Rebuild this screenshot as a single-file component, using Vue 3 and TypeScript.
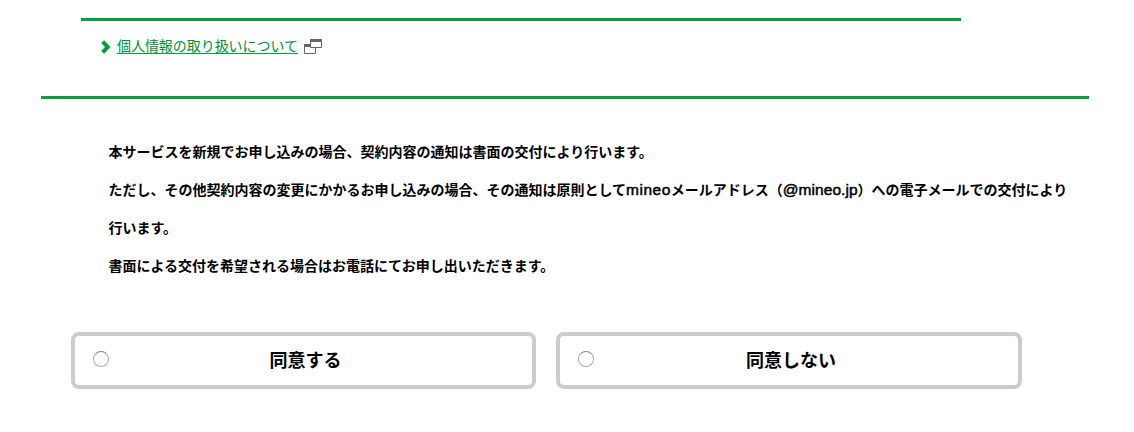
<script setup lang="ts">
import { ref } from 'vue'

const choice = ref<string | null>(null)
const options = [
  { value: 'agree', label: '同意する' },
  { value: 'disagree', label: '同意しない' },
]
</script>

<template>
  <main class="page">
    <section class="privacy">
      <a class="link" href="#">
        <svg class="chevron" width="10" height="14" viewBox="0 0 10 14"><path d="M1.700 1.700 6.800 7l-5.100 5.300" fill="none" stroke="#00a040" stroke-width="4" /></svg>
        <span class="label">個人情報の取り扱いについて</span>
        <svg class="popup" width="18" height="15" viewBox="0 0 18 15"><path d="M.5 5.500h11v9H.5z" fill="#fff" stroke="#666" /><path d="M0 5h12v3H0z" fill="#666" /><path d="M6.500.5h11v8h-11z" fill="#fff" stroke="#666" /><path d="M6 0h12v3H6z" fill="#666" /></svg>
      </a>
    </section>
    <hr class="divider">
    <section class="notice">
      <p>本サービスを新規でお申し込みの場合、契約内容の通知は書面の交付により行います。</p>
      <p>ただし、その他契約内容の変更にかかるお申し込みの場合、その通知は原則として<span class="latin">mineo</span>メールアドレス（<span class="latin">@mineo.jp</span>）への電子メールでの交付により<br>行います。</p>
      <p>書面による交付を希望される場合はお電話にてお申し出いただきます。</p>
    </section>
    <div class="choices">
      <label v-for="option in options" :key="option.value" class="choice">
        <input v-model="choice" type="radio" name="consent" :value="option.value">
        <span>{{ option.label }}</span>
      </label>
    </div>
  </main>
</template>

<style>
body { margin: 0; background: #fff; }
</style>
<style scoped>
.page { height: 432px; overflow: hidden; box-sizing: border-box; padding-top: 18px; color: #000; font-family: "Liberation Sans", "Noto Sans CJK JP", sans-serif; }
.privacy { width: 880px; height: 78px; margin-left: 81px; box-sizing: border-box; border-top: 3px solid #00a040; padding: 13px 0 0 20px; }
.link { display: flex; align-items: center; height: 25px; color: #008f39; text-decoration: none; }
.chevron { width: 10px; flex: none; margin-right: 6px; }
.label { height: 14px; border-bottom: 1px solid #00a040; font-size: 14px; line-height: 14px; letter-spacing: -.05px; }
.popup { margin-left: 6px; }
.divider { width: 1048px; height: 3px; margin: 0 0 0 41px; border: 0; background: #00a040; }
.notice { margin: 34px 0 0 108.500px; }
.notice p { margin: 0; font-size: 14px; line-height: 38px; font-weight: 700; white-space: nowrap; }
.latin { font-size: 15.500px; font-weight: 400; line-height: 1; letter-spacing: .5px; -webkit-text-stroke: .5px #000; }
.latin + .latin { letter-spacing: .05px; }
.choices { display: flex; gap: 20px; margin: 47px 0 0 71px; }
.choice { width: 465px; height: 57px; box-sizing: border-box; border: 4px solid #ccc; border-radius: 8px; display: flex; align-items: center; padding: 0 18px 4px; font-size: 18px; font-weight: 700; }
.choice:last-child { width: 466px; }
.choice input { appearance: none; width: 16px; height: 16px; box-sizing: border-box; margin: 0; border: 1px solid #aaa; border-top-color: #888; border-radius: 50%; background: #fff; }
.choice span { flex: 1; text-align: center; padding-right: 12px; }
</style>
